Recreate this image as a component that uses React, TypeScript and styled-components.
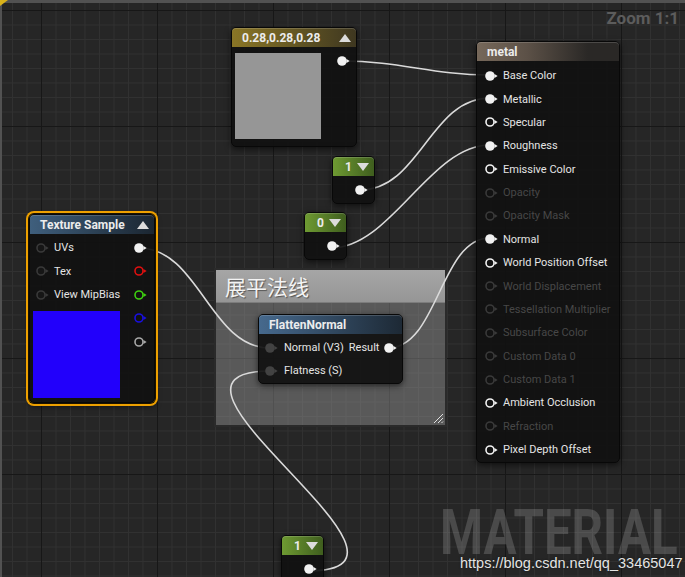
import React from "react";
import styled, { createGlobalStyle } from "styled-components";

const GlobalStyle = createGlobalStyle`
  html, body {
    margin: 0;
    padding: 0;
    background: #262626;
  }
  body {
    font-family: Roboto, "Noto Sans", sans-serif;
  }
`;

type PinKind = "on" | "ring" | "dim" | "stub" | "hole";

interface Socket {
    label: string;
    kind: PinKind;
}

const materialInputs: Socket[] = [
    { label: "Base Color", kind: "on" },
    { label: "Metallic", kind: "on" },
    { label: "Specular", kind: "ring" },
    { label: "Roughness", kind: "on" },
    { label: "Emissive Color", kind: "ring" },
    { label: "Opacity", kind: "dim" },
    { label: "Opacity Mask", kind: "dim" },
    { label: "Normal", kind: "on" },
    { label: "World Position Offset", kind: "ring" },
    { label: "World Displacement", kind: "dim" },
    { label: "Tessellation Multiplier", kind: "dim" },
    { label: "Subsurface Color", kind: "dim" },
    { label: "Custom Data 0", kind: "dim" },
    { label: "Custom Data 1", kind: "dim" },
    { label: "Ambient Occlusion", kind: "ring" },
    { label: "Refraction", kind: "dim" },
    { label: "Pixel Depth Offset", kind: "ring" },
];

const textureOutputs = ["#f2f2f2", "#e01010", "#3ed010", "#1a10e0", "#a8a8a8"];

// wires: [x1, y1, x2, y2, tangent]
const wires: [number, number, number, number, number][] = [
    [342, 61, 490, 75, 60],
    [360, 190, 490, 98, 60],
    [331, 248, 490, 145, 60],
    [139, 248, 270, 348, 60],
    [388, 348, 490, 238, 50],
    [308, 571, 270, 371, 150],
];

function wirePath([x1, y1, x2, y2, d]: [number, number, number, number, number]) {
    return `M${x1} ${y1} C${x1 + d} ${y1}, ${x2 - d} ${y2}, ${x2} ${y2}`;
}

function Pin({ kind, color = "#f2f2f2" }: { kind: PinKind; color?: string }) {
    const c = kind === "dim" || kind === "hole" ? "#3a3a3a" : kind === "stub" ? "#424242" : color;
    return (
        <PinIcon viewBox="0 0 14 10" width={14} height={10}>
            {kind === "on" || kind === "stub" ? (
                <circle cx="5" cy="5" r="4.8" fill={c} />
            ) : (
                <circle
                    cx="5"
                    cy="5"
                    r="4"
                    fill={kind === "hole" ? "#161616" : "none"}
                    stroke={c}
                    strokeWidth="1.6"
                />
            )}
            <path d="M9.5 3 L12.6 5 L9.5 7 Z" fill={c} />
        </PinIcon>
    );
}

export default function App() {
    return (
        <>
            <GlobalStyle />
            <Graph>
                <Corner />
                <ZoomLabel>Zoom 1:1</ZoomLabel>
                <Watermark>MATERIAL</Watermark>

                <Comment>
                    <div className='comment__title'>展平法线</div>
                    <svg className='comment__grip' width='12' height='12' viewBox='0 0 12 12'>
                        <path d='M11 2 L2 11 M11 6 L6 11 M11 9.5 L9.5 11' stroke='#e0e0e0' strokeWidth='1' />
                    </svg>
                </Comment>

                <Wires width='685' height='577' viewBox='0 0 685 577'>
                    {wires.map((w, i) => (
                        <path key={i} d={wirePath(w)} />
                    ))}
                </Wires>

                <NodeBox $x={231} $y={27} $w={126} $h={120}>
                    <Header $from='#8a7626' $to='#3e3720'>
                        0.28,0.28,0.28
                        <Caret $up />
                    </Header>
                    <VectorBody>
                        <Swatch $color='#969696' $size={86} />
                        <Pin kind='on' />
                    </VectorBody>
                </NodeBox>

                <ConstNode x={332} y={156} value='1' />
                <ConstNode x={304} y={212} value='0' />
                <ConstNode x={281} y={535} value='1' />

                <NodeBox $x={29} $y={214} $w={126} $h={189} $selected>
                    <Header $from='#3f5f7d' $to='#1b2631'>
                        Texture Sample
                        <Caret $up />
                    </Header>
                    <TextureBody>
                        <div>
                            {["UVs", "Tex", "View MipBias"].map((label) => (
                                <PinRow key={label} $h={23.5}>
                                    <Pin kind='hole' />
                                    <PinLabel>{label}</PinLabel>
                                </PinRow>
                            ))}
                            <Swatch $color='#2200fb' $size={87} className='texture__preview' />
                        </div>
                        <div>
                            {textureOutputs.map((color, i) => (
                                <PinRow key={color} $h={23.5}>
                                    <Pin kind={i === 0 ? "on" : "ring"} color={color} />
                                </PinRow>
                            ))}
                        </div>
                    </TextureBody>
                </NodeBox>

                <NodeBox $x={258} $y={314} $w={145} $h={70}>
                    <Header $from='#46698d' $to='#1d2935'>
                        FlattenNormal
                    </Header>
                    <FunctionBody>
                        <PinRow $h={23}>
                            <Pin kind='stub' />
                            <PinLabel>Normal (V3)</PinLabel>
                            <PinLabel className='output__label'>Result</PinLabel>
                            <Pin kind='on' />
                        </PinRow>
                        <PinRow $h={23}>
                            <Pin kind='stub' />
                            <PinLabel>Flatness (S)</PinLabel>
                        </PinRow>
                    </FunctionBody>
                </NodeBox>

                <NodeBox $x={476} $y={41} $w={144} $h={422}>
                    <Header $from='#76685a' $to='#2a2826' $material>
                        metal
                    </Header>
                    <MaterialBody>
                        {materialInputs.map((s) => (
                            <PinRow key={s.label} $h={23.375}>
                                <Pin kind={s.kind} />
                                <PinLabel $dim={s.kind === "dim"}>{s.label}</PinLabel>
                            </PinRow>
                        ))}
                    </MaterialBody>
                </NodeBox>

                <SourceUrl>https://blog.csdn.net/qq_33465047</SourceUrl>
            </Graph>
        </>
    );
}

function ConstNode({ x, y, value }: { x: number; y: number; value: string }) {
    return (
        <NodeBox $x={x} $y={y} $w={43} $h={48}>
            <Header $from='#6e9a32' $to='#3f5e1e' $compact>
                {value}
                <Caret />
            </Header>
            <ConstBody>
                <Pin kind='on' />
            </ConstBody>
        </NodeBox>
    );
}

const Graph = styled.div`
    position: relative;
    width: 685px;
    height: 577px;
    overflow: hidden;
    background-color: #262626;
    background-image: linear-gradient(to right, #171717 1px, transparent 1px),
        linear-gradient(to bottom, #171717 1px, transparent 1px),
        linear-gradient(to right, #313131 1px, transparent 1px),
        linear-gradient(to bottom, #313131 1px, transparent 1px);
    background-size: 116px 116px, 116px 116px, 14.5px 14.5px, 14.5px 14.5px;
    background-position: 41px 10px;
    box-shadow: inset 2px 3px 0 #525252;
`;

const Corner = styled.div`
    position: absolute;
    left: 0;
    top: 0;
    width: 0;
    height: 0;
    border-top: 6px solid #d9b21a;
    border-right: 8px solid transparent;
`;

const ZoomLabel = styled.div`
    position: absolute;
    right: 6px;
    top: 8px;
    font-size: 17px;
    font-weight: 700;
    color: #5c5c5c;
`;

const Watermark = styled.div`
    position: absolute;
    left: 440px;
    top: 501px;
    font-size: 63px;
    font-weight: 700;
    line-height: 1;
    color: rgba(255, 255, 255, 0.17);
    transform: scaleX(0.78);
    transform-origin: left top;
    white-space: nowrap;
`;

const SourceUrl = styled.div`
    position: absolute;
    left: 460px;
    top: 555px;
    font-family: "Liberation Sans", Arial, sans-serif;
    font-size: 14.5px;
    line-height: 16px;
    color: #e4e4e4;
    text-shadow: 0 0 2px rgba(0, 0, 0, 0.6);
    white-space: nowrap;
`;

const Comment = styled.div`
    position: absolute;
    left: 214px;
    top: 268px;
    width: 233px;
    height: 159px;
    box-sizing: border-box;
    border: 2px solid #2a2a2a;
    background: rgba(160, 160, 160, 0.42);
    .comment__title {
        height: 33px;
        box-sizing: border-box;
        padding: 2px 0 0 9px;
        background: linear-gradient(to bottom, #a6a6a6, #969696);
        border-bottom: 1px solid #7c7c7c;
        font-family: "Noto Sans CJK SC", sans-serif;
        font-size: 21px;
        line-height: 28px;
        color: #f4f4f4;
        text-shadow: 1px 1px 1px rgba(0, 0, 0, 0.45);
    }
    .comment__grip {
        position: absolute;
        right: 1px;
        bottom: 1px;
    }
`;

const Wires = styled.svg`
    position: absolute;
    left: 0;
    top: 0;
    pointer-events: none;
    path {
        fill: none;
        stroke: #dadada;
        stroke-width: 1.6;
    }
`;

const NodeBox = styled.div<{ $x: number; $y: number; $w: number; $h: number; $selected?: boolean }>`
    position: absolute;
    left: ${(p) => p.$x}px;
    top: ${(p) => p.$y}px;
    width: ${(p) => p.$w}px;
    height: ${(p) => p.$h}px;
    box-sizing: border-box;
    display: flex;
    flex-direction: column;
    background: rgba(17, 17, 17, 0.93);
    border: 1px solid #080808;
    border-radius: 5px;
    box-shadow: ${(p) =>
        p.$selected
            ? "0 0 0 1px #1a1200, 0 0 0 3px #eda000, 0 3px 6px rgba(0,0,0,0.6)"
            : "0 2px 6px rgba(0, 0, 0, 0.6)"};
`;

const Header = styled.div<{ $from: string; $to: string; $compact?: boolean; $material?: boolean }>`
    flex: none;
    height: 19px;
    box-sizing: border-box;
    display: flex;
    align-items: center;
    justify-content: space-between;
    padding: ${(p) => (p.$compact ? "0 5px 0 12px" : "0 5px 0 10px")};
    border-radius: 4px 4px 0 0;
    background: ${(p) =>
        p.$material
            ? `linear-gradient(to right, ${p.$from} 0%, #5c5147 35%, ${p.$to} 78%)`
            : `linear-gradient(to right, ${p.$from}, ${p.$to})`};
    box-shadow: inset 0 1px 0 rgba(255, 255, 255, 0.16);
    font-size: 12px;
    font-weight: 700;
    color: #ececec;
    white-space: nowrap;
`;

const Caret = styled.span<{ $up?: boolean }>`
    width: 0;
    height: 0;
    border-left: 6px solid transparent;
    border-right: 6px solid transparent;
    ${(p) => (p.$up ? "border-bottom: 8px solid #dcdcdc;" : "border-top: 8px solid #dcdcdc;")}
`;

const PinIcon = styled.svg`
    flex: none;
    display: block;
`;

const PinRow = styled.div<{ $h: number }>`
    height: ${(p) => p.$h}px;
    display: flex;
    align-items: center;
    gap: 4px;
`;

const PinLabel = styled.span<{ $dim?: boolean }>`
    font-size: 11px;
    color: ${(p) => (p.$dim ? "#474747" : "#e4e4e4")};
    white-space: nowrap;
`;

const Swatch = styled.div<{ $color: string; $size: number }>`
    flex: none;
    width: ${(p) => p.$size}px;
    height: ${(p) => p.$size}px;
    background: ${(p) => p.$color};
`;

const VectorBody = styled.div`
    display: flex;
    align-items: flex-start;
    gap: 16px;
    padding: 6px 0 0 3px;
    svg {
        margin-top: 3px;
    }
`;

const ConstBody = styled.div`
    display: flex;
    padding: 9px 0 0 22px;
`;

const TextureBody = styled.div`
    display: flex;
    justify-content: space-between;
    padding: 2px 6px 0 6px;
    .texture__preview {
        margin: 4px 0 0 -3px;
    }
`;

const FunctionBody = styled.div`
    padding: 2px 5px 0 6px;
    .output__label {
        margin-left: auto;
    }
    ${PinRow} {
        gap: 5px;
    }
`;

const MaterialBody = styled.div`
    padding: 3px 0 0 8px;
`;
